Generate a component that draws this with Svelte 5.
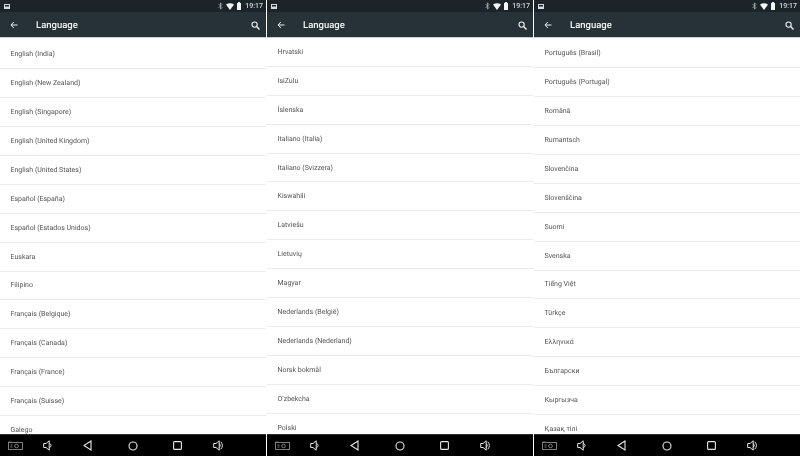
<script lang="ts">
    const panels = [
        {
            offset: 0.4,
            languages: [
                "English (India)",
                "English (New Zealand)",
                "English (Singapore)",
                "English (United Kingdom)",
                "English (United States)",
                "Español (España)",
                "Español (Estados Unidos)",
                "Euskara",
                "Filipino",
                "Français (Belgique)",
                "Français (Canada)",
                "Français (France)",
                "Français (Suisse)",
                "Galego",
            ],
        },
        {
            offset: -2,
            languages: [
                "Hrvatski",
                "IsiZulu",
                "Íslenska",
                "Italiano (Italia)",
                "Italiano (Svizzera)",
                "Kiswahili",
                "Latviešu",
                "Lietuvių",
                "Magyar",
                "Nederlands (België)",
                "Nederlands (Nederland)",
                "Norsk bokmål",
                "O‘zbekcha",
                "Polski",
            ],
        },
        {
            offset: -0.6,
            languages: [
                "Português (Brasil)",
                "Português (Portugal)",
                "Română",
                "Rumantsch",
                "Slovenčina",
                "Slovenščina",
                "Suomi",
                "Svenska",
                "Tiếng Việt",
                "Türkçe",
                "Ελληνικά",
                "Български",
                "Кыргызча",
                "Қазақ тілі",
            ],
        },
    ];
</script>

<div class="screens">
    {#each panels as panel}
        <section class="phone">
            <div class="status">
                <svg viewBox="0 0 6 5" width="6" height="5">
                    <rect x="0.500" y="0.500" width="5" height="4" fill="none" stroke="#d5dadc" />
                    <rect x="1" y="2.500" width="4" height="2" fill="#d5dadc" />
                </svg>
                <span class="spacer"></span>
                <svg viewBox="0 0 5 8" width="5" height="8">
                    <path d="M0.500 2 4 5.500 2.500 7.200V0.800L4 2.500 0.500 6" fill="none" stroke="#b9c0c4" stroke-width="0.700" />
                </svg>
                <svg viewBox="0 0 8 7" width="8" height="7">
                    <path d="M0 1.500Q4-1 8 1.500L4 7Z" fill="#f4f6f6" />
                </svg>
                <svg viewBox="0 0 4 8" width="4" height="8">
                    <rect y="1" width="4" height="7" fill="#f4f6f6" />
                    <rect x="1" width="2" height="1" fill="#f4f6f6" />
                </svg>
                <span class="time">19:17</span>
            </div>
            <header class="toolbar">
                <svg viewBox="0 0 8 8" width="8" height="8">
                    <path d="M7.500 4H1M3.900 1 1 4l2.900 3" fill="none" stroke="#eef1f2" stroke-width="1" />
                </svg>
                <h1>Language</h1>
                <svg viewBox="0 0 9 9" width="9" height="9">
                    <circle cx="3.600" cy="3.600" r="2.600" fill="none" stroke="#eef1f2" stroke-width="1.100" />
                    <path d="M5.600 5.600 8.500 8.500" stroke="#eef1f2" stroke-width="1.400" />
                </svg>
            </header>
            <div class="list">
                <ul style="margin-top: {panel.offset}px">
                    {#each panel.languages as language}
                        <li>{language}</li>
                    {/each}
                </ul>
            </div>
            <nav class="nav">
                <svg viewBox="0 0 15 9" width="15" height="9">
                    <rect x="0.500" y="1.500" width="14" height="7" fill="none" stroke="#7d7d7d" />
                    <path d="M0.500 1.500h3v-1h-3z" fill="#7d7d7d" />
                    <circle cx="8.500" cy="5" r="1.800" fill="none" stroke="#7d7d7d" />
                    <path d="M2.500 4h2M2.500 6h2" stroke="#7d7d7d" />
                </svg>
                <svg class="vol-down" viewBox="0 0 10 11" width="10" height="11">
                    <path d="M0.700 3.500H3L6.200 0.800V10.200L3 7.500H0.700ZM6.200 3Q10 5.500 6.200 8" fill="none" stroke="#e6e6e6" />
                </svg>
                <svg class="back" viewBox="0 0 9 11" width="9" height="11">
                    <path d="M8 1 1 5.500 8 10Z" fill="none" stroke="#e6e6e6" stroke-width="1.100" />
                </svg>
                <svg class="home" viewBox="0 0 10 10" width="10" height="10">
                    <circle cx="5" cy="5" r="4" fill="none" stroke="#e6e6e6" stroke-width="1.100" />
                </svg>
                <svg class="recents" viewBox="0 0 9 9" width="9" height="9">
                    <rect x="0.600" y="0.600" width="7.800" height="7.800" rx="1" fill="none" stroke="#e6e6e6" stroke-width="1.100" />
                </svg>
                <svg class="vol-up" viewBox="0 0 12 11" width="12" height="11">
                    <path d="M0.700 3.500H3L6.200 0.800V10.200L3 7.500H0.700ZM6.200 3.500Q8.500 5.500 6.200 7.500M7.800 1.800Q11 5.500 7.800 9.200" fill="none" stroke="#e6e6e6" />
                </svg>
            </nav>
        </section>
    {/each}
</div>

<style>
    :global(body) {
        margin: 0;
        background: #fff;
    }

    .screens {
        display: flex;
        gap: 1px;
        width: 800px;
        height: 456px;
        font-family: Roboto, "Noto Sans", sans-serif;
        text-rendering: geometricPrecision;
    }

    .phone {
        flex: 1;
        min-width: 0;
        display: flex;
        flex-direction: column;
        overflow: hidden;
        filter: blur(0.3px);
    }

    .status {
        flex: none;
        height: 12px;
        box-sizing: border-box;
        padding: 0 3px 0 4px;
        display: flex;
        align-items: center;
        gap: 3px;
        background: #1b2429;
    }

    .spacer {
        flex: 1;
    }

    .time {
        margin-left: 1px;
        color: #d5dadc;
        font-size: 7px;
        font-weight: 500;
    }

    .toolbar {
        flex: none;
        height: 26px;
        box-sizing: border-box;
        display: flex;
        align-items: center;
        padding: 1px 6px 0 10px;
        background: #263238;
        border-bottom: 1px solid #c5cbce;
    }

    .toolbar h1 {
        flex: 1;
        margin: 0 0 0 18px;
        color: #f1f3f4;
        font-size: 9.500px;
        font-weight: 500;
    }

    .list {
        flex: 1;
        min-height: 0;
        overflow: hidden;
        padding-top: 2px;
        background: #fff;
        /* the list is all greys: this drops the colour fringes of the text */
        filter: grayscale(1);
    }

    ul {
        list-style: none;
        margin: 0;
        padding: 0;
    }

    li {
        height: 28.900px;
        box-sizing: border-box;
        padding-left: 10.500px;
        display: flex;
        align-items: center;
        border-bottom: 1px solid #ececec;
        color: #555;
        font-size: 7px;
    }

    .nav {
        flex: none;
        height: 22px;
        display: flex;
        align-items: center;
        background: #000;
        border-top: 1px solid #333;
        box-sizing: border-box;
        padding-left: 8px;
    }

    .vol-down {
        margin-left: 20px;
    }

    .back {
        margin-left: 30px;
    }

    .home {
        margin-left: 36px;
    }

    .recents {
        margin-left: 35px;
    }

    .vol-up {
        margin-left: 31px;
    }
</style>
